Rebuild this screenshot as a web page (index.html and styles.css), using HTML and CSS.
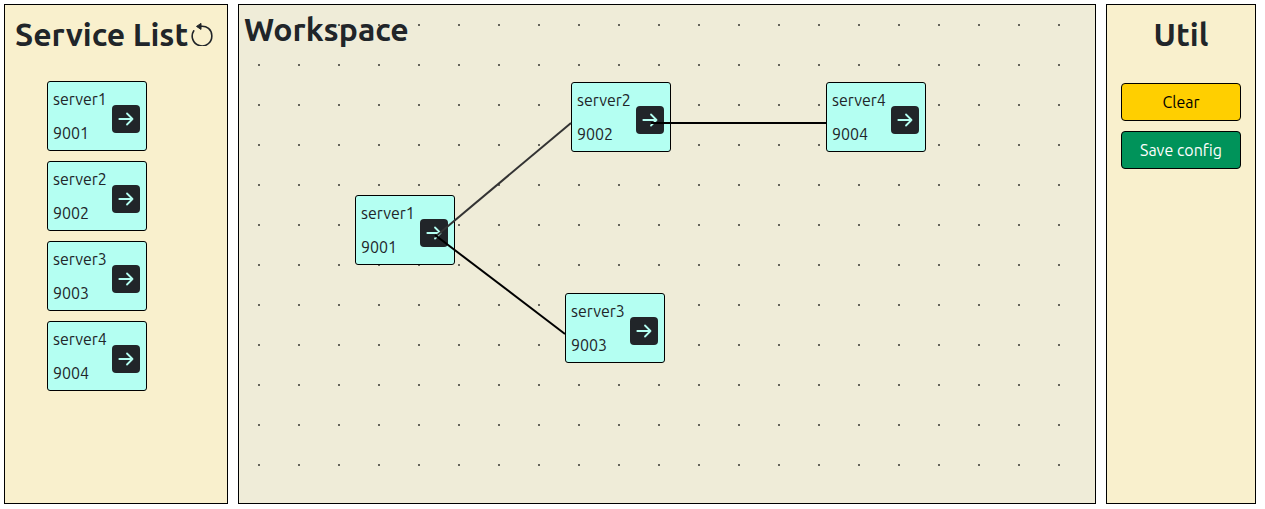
FILE: index.html
```html
<!DOCTYPE html>
<html lang="en">
<head>
<meta charset="utf-8">
<title>Workspace</title>
<link rel="stylesheet" href="styles.css">
</head>
<body>
<svg class="symbols" aria-hidden="true">
  <symbol id="arrow" viewBox="0 0 16 16"><path fill="none" stroke="currentColor" stroke-width="1.8" stroke-linecap="round" stroke-linejoin="round" d="M1.3 8h13.2M9 2.5 14.5 8 9 13.5"/></symbol>
</svg>
<main class="layout">
  <section class="panel services">
    <header class="services-head">
      <h2 class="title">Service List</h2>
      <button class="reload" type="button" aria-label="Reload services">
        <svg class="reload-icon" viewBox="0 0 24 24"><path fill="none" stroke="currentColor" stroke-width="1.6" stroke-linecap="round" d="M10 4.4C17 3.2 21.8 8 21.8 13.6A9.8 9.8 0 1 1 3.8 8.8"/><path fill="currentColor" stroke="currentColor" stroke-linejoin="round" d="M6.5 4.4l4.5-3v6z"/></svg>
      </button>
    </header>
    <ul class="service-list">
      <li class="card"><span>server1</span><span>9001</span><button class="link" type="button" aria-label="Connect server1"><svg class="arrow"><use href="#arrow"/></svg></button></li>
      <li class="card"><span>server2</span><span>9002</span><button class="link" type="button" aria-label="Connect server2"><svg class="arrow"><use href="#arrow"/></svg></button></li>
      <li class="card"><span>server3</span><span>9003</span><button class="link" type="button" aria-label="Connect server3"><svg class="arrow"><use href="#arrow"/></svg></button></li>
      <li class="card"><span>server4</span><span>9004</span><button class="link" type="button" aria-label="Connect server4"><svg class="arrow"><use href="#arrow"/></svg></button></li>
    </ul>
  </section>
  <section class="panel workspace">
    <h2 class="title">Workspace</h2>
    <div class="card node node-1"><span>server1</span><span>9001</span><button class="link" type="button" aria-label="Connect server1"><svg class="arrow"><use href="#arrow"/></svg></button></div>
    <div class="card node node-2"><span>server2</span><span>9002</span><button class="link" type="button" aria-label="Connect server2"><svg class="arrow"><use href="#arrow"/></svg></button></div>
    <div class="card node node-3"><span>server3</span><span>9003</span><button class="link" type="button" aria-label="Connect server3"><svg class="arrow"><use href="#arrow"/></svg></button></div>
    <div class="card node node-4"><span>server4</span><span>9004</span><button class="link" type="button" aria-label="Connect server4"><svg class="arrow"><use href="#arrow"/></svg></button></div>
    <svg class="wires" aria-hidden="true">
      <path class="wire wire-soft" d="M196 232 332 118"/>
      <path class="wire" d="M196 230 326 329"/>
      <path class="wire" d="M412 118H587"/>
    </svg>
  </section>
  <aside class="panel util">
    <h2 class="title">Util</h2>
    <button class="action clear" type="button">Clear</button>
    <button class="action save" type="button">Save config</button>
  </aside>
</main>
</body>
</html>
```
FILE: styles.css
```css
* { box-sizing: border-box; }

body {
  margin: 0;
  background: #fff;
  color: #212529;
  font: 16px/24px Ubuntu, "Noto Sans", sans-serif;
}

.symbols { display: none; }

.layout {
  display: flex;
  gap: 10px;
  min-height: 100vh;
  padding: 4px 9px 5px 4px;
}

.panel {
  border: 1px solid #000;
  background: #f9f0cd;
}

.title {
  margin: 0;
  font-size: 32px;
  font-weight: 600;
  line-height: 38px;
  white-space: nowrap;
}

.services {
  flex: 0 0 224px;
  padding: 10px;
}

.services-head {
  display: flex;
  align-items: center;
  gap: 2px;
}

.reload {
  display: flex;
  padding: 0;
  border: 0;
  background: none;
  color: inherit;
}

.reload-icon {
  width: 24px;
  height: 24px;
}

.service-list {
  display: flex;
  flex-direction: column;
  gap: 10px;
  margin: 28px 0 0 32px;
  padding: 0;
  list-style: none;
}

.card {
  position: relative;
  display: flex;
  flex-direction: column;
  gap: 10px;
  width: 100px;
  height: 70px;
  padding: 5px;
  border: 1px solid #000;
  border-radius: 3px;
  background: #b4fff2;
}

.link {
  position: absolute;
  right: 6px;
  top: 23px;
  display: grid;
  place-items: center;
  width: 28px;
  height: 28px;
  padding: 0;
  border: 0;
  border-radius: 4px;
  background: #212529;
  color: #b4fff2;
}

.arrow {
  width: 16px;
  height: 16px;
}

.workspace {
  position: relative;
  flex: 1;
  min-width: 0;
  padding: 5px;
  background-color: #efecd8;
  background-image: radial-gradient(circle, #66655c 1px, transparent 1px);
  background-size: 40px 40px;
}

.node { position: absolute; }
.node-1 { left: 116px; top: 190px; }
.node-2 { left: 332px; top: 77px; }
.node-3 { left: 326px; top: 288px; }
.node-4 { left: 587px; top: 77px; }

.wires {
  position: absolute;
  inset: 0;
  width: 100%;
  height: 100%;
  pointer-events: none;
}

.wire {
  fill: none;
  stroke: #000;
  stroke-width: 2;
}

.wire-soft { stroke: #333; }

.util {
  flex: 0 0 150px;
  display: flex;
  flex-direction: column;
  gap: 10px;
  padding: 10px 14px;
}

.util .title {
  margin-bottom: 20px;
  text-align: center;
}

.action {
  height: 38px;
  padding: 0;
  border: 1px solid #000;
  border-radius: 4px;
  font: inherit;
}

.clear {
  background: #ffcf00;
  color: #000;
}

.save {
  background: #00935a;
  color: #fff;
}
```
